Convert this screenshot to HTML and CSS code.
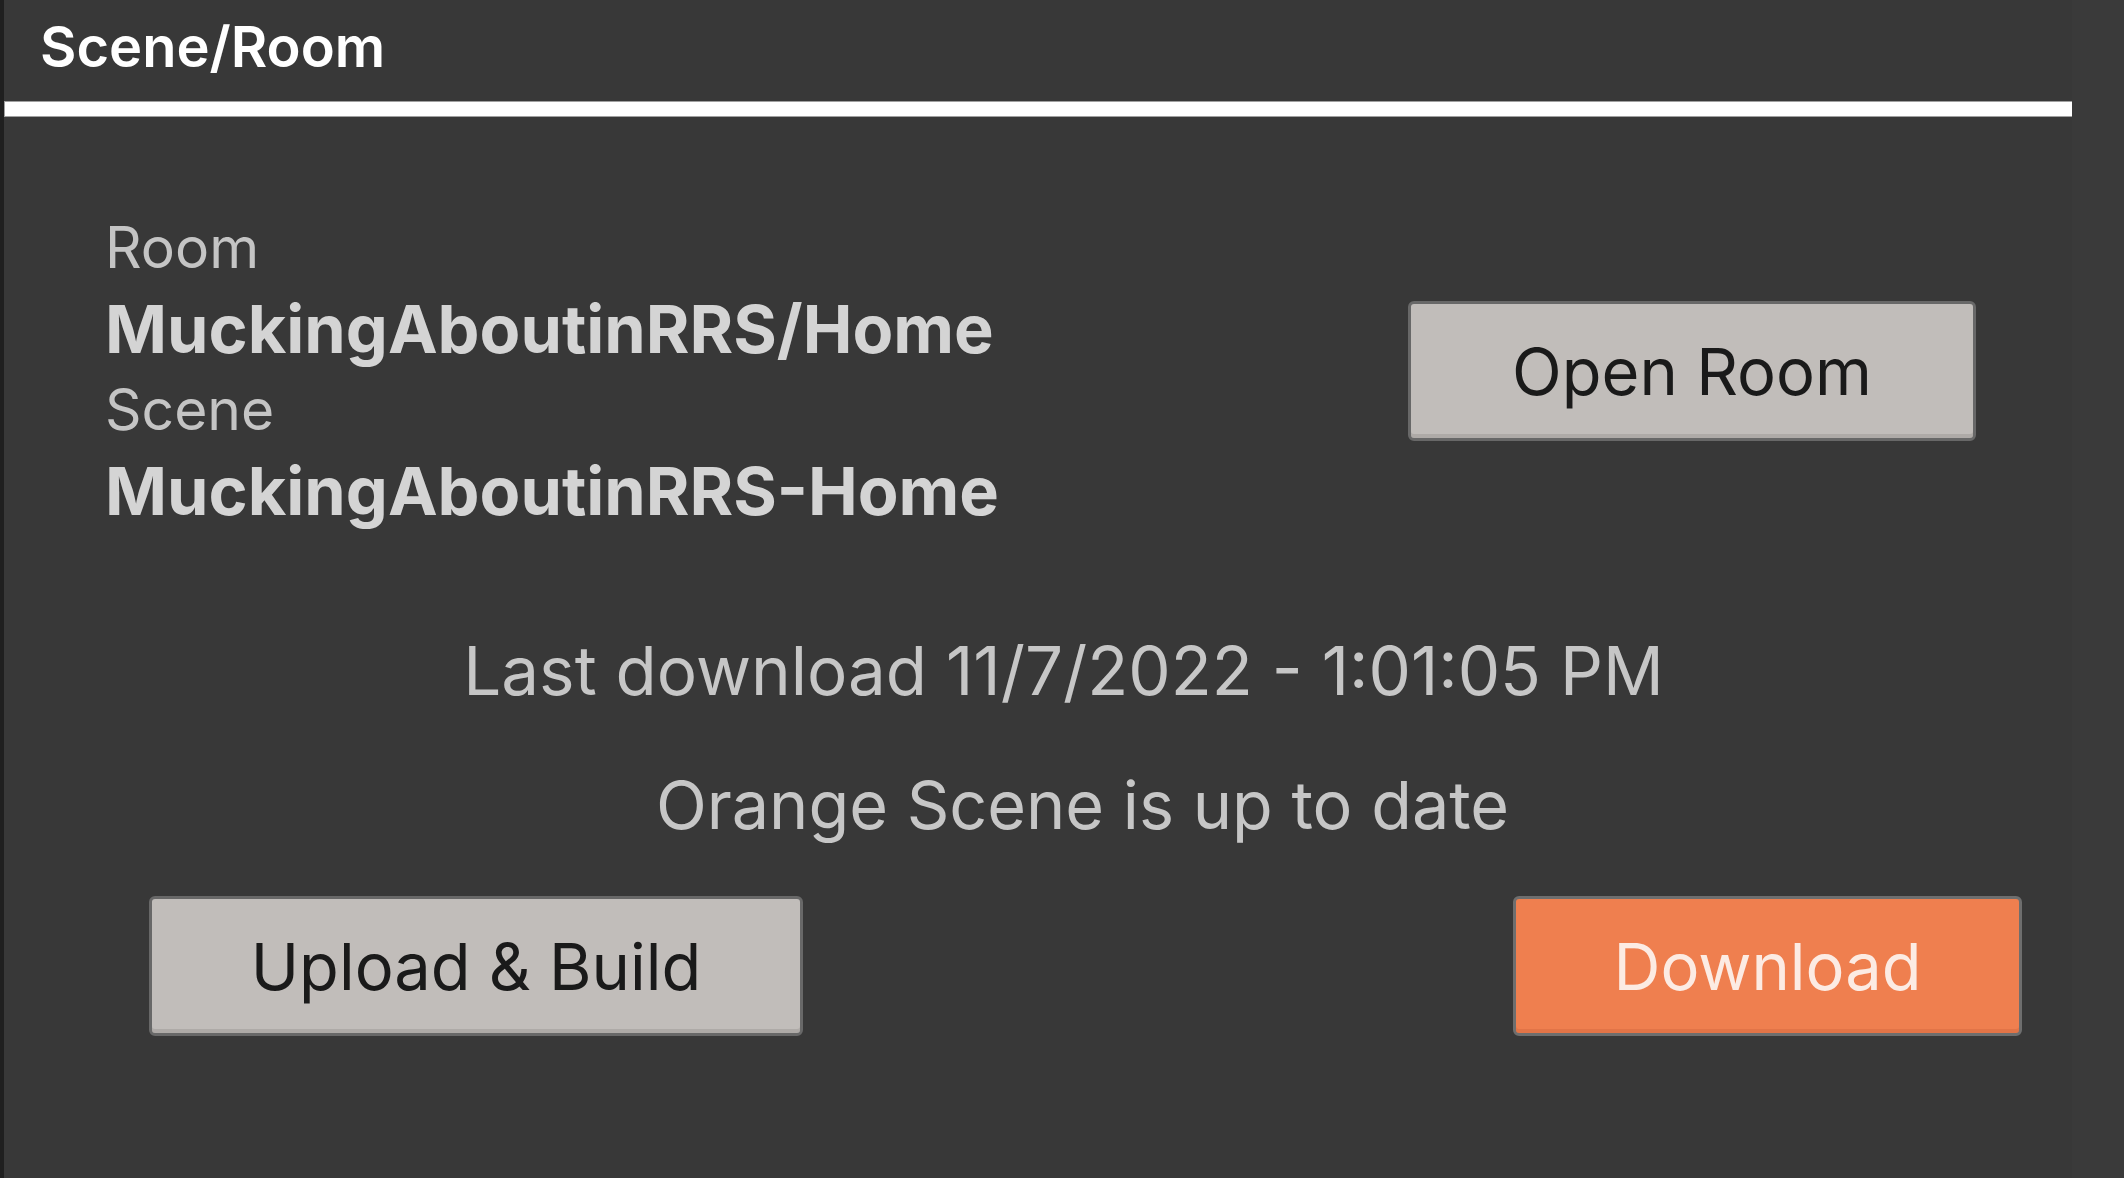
FILE: index.html
```html
<!DOCTYPE html>
<html lang="en">
<head>
<meta charset="utf-8">
<title>Scene/Room</title>
<link rel="stylesheet" href="styles.css">
</head>
<body>
<div class="window">
  <div class="edge"></div>
  <div class="panel">
    <div class="header">
      <span class="title">Scene/Room</span>
    </div>
    <div class="rule"></div>
    <div class="info-row">
      <div class="info">
        <div class="label">Room</div>
        <div class="name">MuckingAboutinRRS/Home</div>
        <div class="label">Scene</div>
        <div class="name">MuckingAboutinRRS-Home</div>
      </div>
      <button class="btn btn-open">Open Room</button>
    </div>
    <div class="lower">
      <div class="status status-last">Last download 11/7/2022 - 1:01:05 PM</div>
      <div class="status status-state">Orange Scene is up to date</div>
      <div class="actions">
        <button class="btn btn-upload">Upload &amp; Build</button>
        <button class="btn btn-download">Download</button>
      </div>
    </div>
  </div>
  <div class="side"></div>
</div>
</body>
</html>
```

FILE: styles.css
```css
html, body {
  margin: 0;
  padding: 0;
  background: #383838;
}

body {
  width: 2124px;
  height: 1178px;
  overflow: hidden;
  font-family: Inter, "Noto Sans", "Liberation Sans", sans-serif;
}

.window {
  display: flex;
  height: 1178px;
}

.edge {
  width: 4px;
  background: #1f1f1f;
  flex: none;
}

.panel {
  width: 2068px;
  flex: none;
  display: flex;
  flex-direction: column;
  background: #383838;
}

.side {
  flex: 1;
  background: #3a3a3a;
}

.header {
  height: 102px;
  display: flex;
  align-items: center;
  padding-left: 36px;
  box-sizing: border-box;
  padding-bottom: 8px;
}

.title {
  color: #ffffff;
  font-size: 56px;
  font-weight: 600;
  line-height: 1;
}

.rule {
  height: 14px;
  background: #ffffff;
  box-shadow: 0 0 0 1px #a0a0a0;
  margin-left: 1px;
}

.info-row {
  display: flex;
  align-items: center;
  justify-content: space-between;
  padding: 94px 96px 0 101px;
}

.info {
  display: flex;
  flex-direction: column;
}

.label {
  color: #c4c4c4;
  font-size: 57px;
  line-height: 76px;
  font-weight: 400;
}

.name {
  color: #d4d4d4;
  font-size: 66.6px;
  line-height: 86px;
  font-weight: 700;
}

.btn {
  font-family: Inter, "Noto Sans", "Liberation Sans", sans-serif;
  font-size: 65px;
  font-weight: 400;
  color: #1a1a1a;
  background: #c1bdba;
  border: 3px solid #686868;
  border-radius: 6px;
  height: 140px;
  padding: 0;
  box-sizing: border-box;
  box-shadow: inset 0 -4px 0 #aeaaa7;
}

.btn-open {
  width: 568px;
  margin-top: -2px;
}

.lower {
  display: flex;
  flex-direction: column;
  align-items: center;
  margin: 98px 50px 0 145px;
}

.status {
  color: #c6c6c6;
  font-size: 66.5px;
  line-height: 78px;
  text-align: center;
}

.status-last {
  font-size: 67.3px;
  margin-right: 44px;
}

.status-state {
  margin-top: 56px;
  margin-right: 6px;
}

.actions {
  align-self: stretch;
  display: flex;
  justify-content: space-between;
  margin-top: 52px;
}

.btn-upload {
  width: 654px;
}

.btn-download {
  width: 509px;
  background: #ef7f4f;
  color: #fcebe3;
  box-shadow: inset 0 -4px 0 #e27447;
  border-color: #6e6e6e;
}
```
